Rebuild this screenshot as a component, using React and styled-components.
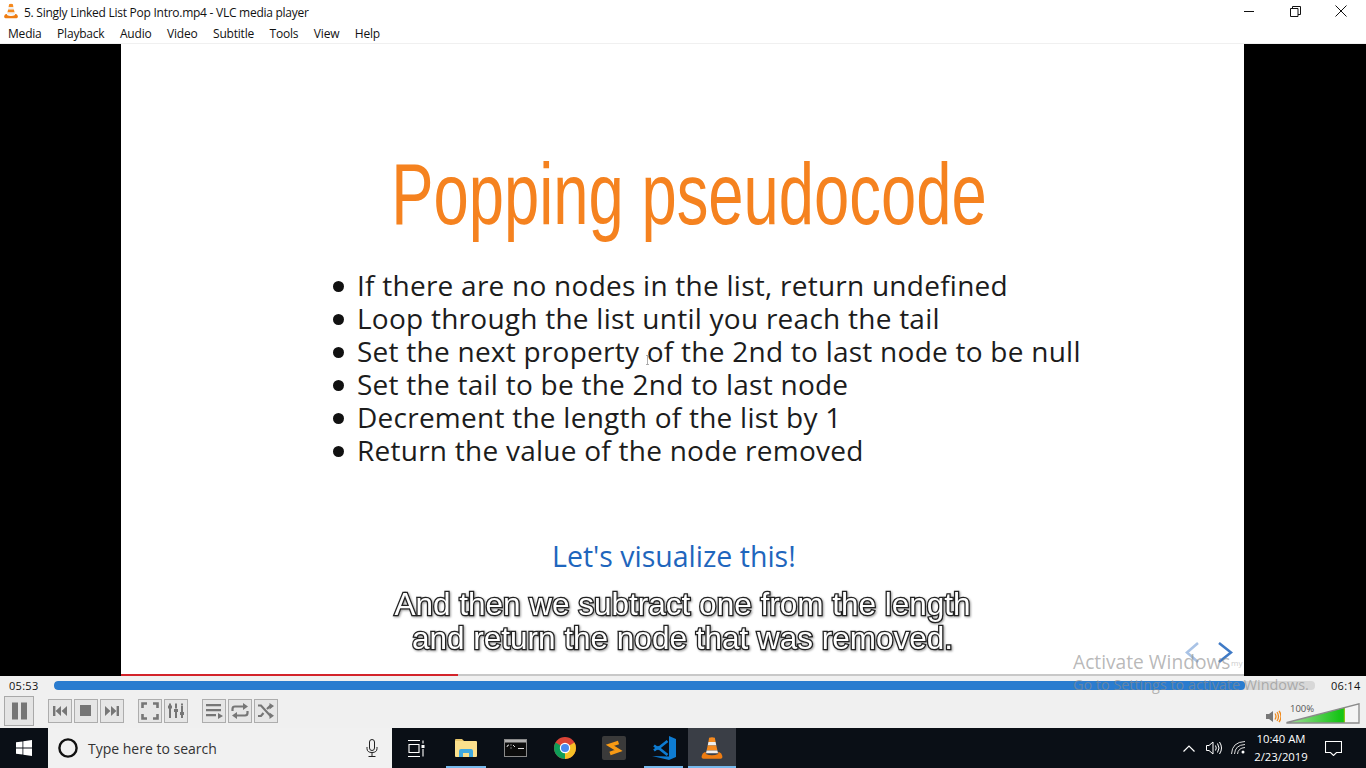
import React from "react";
import styled, { createGlobalStyle } from "styled-components";

const Global = createGlobalStyle`
  html, body { margin: 0; padding: 0; width: 1366px; height: 768px; overflow: hidden; background: #000; }
  * { box-sizing: border-box; }
`;
const UI = `"Open Sans", "Noto Sans", "Liberation Sans", sans-serif`;

const Page = styled.div`position: relative; width: 1366px; height: 768px; display: flex; flex-direction: column; font-family: ${UI}; overflow: hidden;`;
const TitleBar = styled.div`height: 22px; background: #fff; display: flex; align-items: center; padding: 0 2px 0 3px; gap: 5px; color: #111; font-size: 12px; letter-spacing: -0.26px;`;
const TitleText = styled.span`flex: 1; white-space: nowrap; padding-top: 2px;`;
const WinButtons = styled.div`display: flex; align-items: center; height: 22px;`;
const WinBtn = styled.div`width: 46px; height: 22px; display: flex; align-items: center; justify-content: center;`;
const MenuBar = styled.div`height: 22px; background: #fff; border-bottom: 1px solid #f0f0f0; display: flex; align-items: center; padding: 2px 0 0 8px; gap: 15.5px; font-size: 12px; color: #111; letter-spacing: -0.2px;`;
const Video = styled.div`position: relative; height: 632px; background: #000; display: flex; padding: 0 122px 0 121px;`;
const Slide = styled.div`position: relative; width: 1123px; overflow: hidden; background: #fff; display: flex; flex-direction: column; align-items: flex-start;`;
const Heading = styled.h1`margin: 95px 0 0 13px; width: 1110px; text-align: center; font: 400 88px/110px "Liberation Sans", sans-serif; color: #f5821f; transform: scaleX(.72); white-space: nowrap;`;
const Bullets = styled.ul`margin: 20px 0 0 0; padding: 0 0 0 236px; list-style: none; font: 400 28px/33px "Open Sans", sans-serif; color: #1c1c1c; letter-spacing: .25px;`;
const Bullet = styled.li`position: relative; white-space: nowrap; &::before { content: ""; position: absolute; left: -24px; top: 12px; width: 11px; height: 11px; border-radius: 50%; background: #111; }`;
const Visualize = styled.div`margin: 71px 0 0 431px; font: 400 28.5px/36px "Open Sans", sans-serif; color: #1f66bd;`;
const Subtitle = styled.div`position: absolute; left: 0; right: 0; top: 544px; text-align: center; font: 400 31.5px/33.5px "Liberation Sans", sans-serif; color: #fff; -webkit-text-stroke: 2.6px #222; paint-order: stroke fill; filter: drop-shadow(1px 1px 1px rgba(0,0,0,.4));`;
const SeekLine = styled.div`position: absolute; left: 0; right: 0; bottom: 0; height: 2px; background: #c8c8c8;`;
const SeekRed = styled.div`height: 2px; width: 337px; background: #d3232a;`;
const NavArrows = styled.svg`position: absolute; left: 1062px; top: 596px; width: 50px; height: 30px;`;
const Cursor = styled.svg`position: absolute; left: 524px; top: 311px; width: 5px; height: 10px;`;
const GhostLogo = styled.span`position: absolute; left: 1110px; top: 613px; font-size: 8px; color: #ccc;`;

const Controls = styled.div`height: 52px; background: #f0f0f0; display: flex; flex-direction: column;`;
const SeekRow = styled.div`height: 20px; display: flex; align-items: center; padding-bottom: 1px; font-size: 11px; color: #111; letter-spacing: .3px;`;
const Time = styled.span`width: ${p => p.$w}px; padding-left: ${p => p.$l}px; white-space: nowrap;`;
const Track = styled.div`width: 1261px; height: 9px; border-radius: 4px; background: #d8d8d8; overflow: hidden;`;
const Fill = styled.div`width: 1191px; height: 9px; background: #2a7ccf; border-radius: 4px;`;
const ButtonRow = styled.div`height: 32px; display: flex; align-items: flex-start; padding-left: 4px;`;
const BigBtn = styled.div`width: 30px; height: 30px; border: 1px solid #a9a9a9; background: #e4e4e4; display: flex; align-items: center; justify-content: center; margin-right: 14px;`;
const Group = styled.div`display: flex; gap: 2px; margin-top: 3px; margin-right: 14px;`;
const Btn = styled.div`width: 24px; height: 24px; border: 1px solid #adadad; background: #e6e6e6; display: flex; align-items: center; justify-content: center;`;
const Volume = styled.div`margin-left: auto; position: relative; display: flex; align-items: flex-end; width: 110px; height: 30px; padding: 0 6px 2px 6px;`;
const VolPct = styled.span`position: absolute; left: 34px; top: 6px; font-size: 9.5px; color: #555;`;

const Taskbar = styled.div`height: 40px; background: #0a0f16; display: flex; align-items: stretch;`;
const Start = styled.div`width: 48px; display: flex; align-items: center; justify-content: center;`;
const Search = styled.div`width: 344px; background: #f1f1f1; display: flex; align-items: center; padding: 0 14px 0 10px; gap: 10px; color: #333; font-size: 14px;`;
const SearchText = styled.span`flex: 1;`;
const Task = styled.div`position: relative; width: ${p => p.$active ? 48 : 49.4}px; display: flex; align-items: center; justify-content: center; background: ${p => p.$active ? "#3a3e46" : "transparent"}; &::after { content: ""; display: ${p => p.$open ? "block" : "none"}; position: absolute; bottom: 0; left: ${p => p.$active ? 0 : "5px"}; right: ${p => p.$active ? 0 : "5px"}; height: 2px; background: #76b9ed; }`;
const Tray = styled.div`margin-left: auto; display: flex; align-items: center; padding-right: 12px; color: #fff;`;
const TrayIcon = styled.div`width: ${p => p.$w}px; display: flex; align-items: center; justify-content: center;`;
const Clock = styled.div`width: 62px; text-align: center; font-size: 11.3px; line-height: 18px; color: #fff;`;
const Watermark = styled.div`position: absolute; left: 1073px; top: 649px; color: rgba(140,140,140,.62); pointer-events: none; white-space: nowrap;`;
const WmBig = styled.div`font-size: 19.2px; line-height: 25px;`;
const WmSmall = styled.div`font-size: 14.4px; line-height: 20px; margin-top: 1px;`;

const Cone = ({ s = 16 }) => (
  <svg width={s} height={s} viewBox="0 0 20 20">
    <path d="M7.6 1.5 Q10 .4 12.4 1.5 L13 5 H7Z" fill="#f58a1f" />
    <path d="M7 5 H13 L13.6 8 H6.4Z" fill="#eee" />
    <path d="M6.4 8 H13.6 L14.5 12 H5.5Z" fill="#f58a1f" />
    <path d="M5.5 12 H14.5 L15 14.4 H5Z" fill="#eee" />
    <path d="M3.8 13.6 H5 L4.8 15 Q10 17.2 15.2 15 L15 13.6 H16.2 Q18 14 18.6 16.6 Q19 18.8 17 19 H3 Q1 18.8 1.4 16.6 Q2 14 3.8 13.6Z" fill="#ef7d12" />
  </svg>
);
const Ic = styled.svg`display: block;`;
const G = "#767676";
const IcoPrev = () => <Ic width="16" height="16" viewBox="0 0 16 16" fill={G}><path d="M1 3h2.4v10H1zM9 3v10L3.6 8zM15 3v10L9.6 8z" /></Ic>;
const IcoStop = () => <Ic width="12" height="12" viewBox="0 0 12 12" fill={G}><rect width="11" height="11" /></Ic>;
const IcoNext = () => <Ic width="16" height="16" viewBox="0 0 16 16" fill={G}><path d="M1 3v10l5.4-5zM7 3v10l5.4-5zM12.6 3H15v10h-2.4z" /></Ic>;
const IcoFull = () => <Ic width="18" height="18" viewBox="0 0 18 18" fill="none" stroke={G} strokeWidth="2.6"><path d="M1.5 6V1.5H6M12 1.5h4.5V6M16.5 12v4.5H12M6 16.5H1.5V12" /></Ic>;
const IcoEq = () => <Ic width="18" height="18" viewBox="0 0 18 18" fill={G}><path d="M2 6h2v10H2zM8 9h2v7H8zM14 4h2v12h-2zM1 3.5h4v3H1zM7 7h4v3H7zM13 10h4v3h-4zM2 1.5h2v2H2zM8 1.5h2v5H8zM14 1.5h2v2h-2z" /></Ic>;
const IcoList = () => <Ic width="18" height="16" viewBox="0 0 18 16" fill={G}><path d="M1 1h15v2.2H1zM1 6h15v2.2H1zM1 11h10v2.2H1zM13 10l5 3-5 3z" /></Ic>;
const IcoLoop = () => <Ic width="18" height="18" viewBox="0 0 18 18" fill="none" stroke={G} strokeWidth="2.2"><path d="M1.5 9V7q0-2.5 2.5-2.5h9" /><path d="M16.5 9v2q0 2.5-2.5 2.5H5" /><path fill={G} stroke="none" d="M12 1l5 3.5L12 8zM6 10l-5 3.5L6 17z" /></Ic>;
const IcoShuffle = () => <Ic width="18" height="18" viewBox="0 0 18 18" fill="none" stroke={G} strokeWidth="2.2"><path d="M1 3.5h3l9 10h1M1 14h3l2.5-3M10 7l3-3h1" /><path fill={G} stroke="none" d="M12.5 1L17 4l-4.5 3.5zM12.5 10.5L17 13.7 12.5 17z" /></Ic>;

export default function App() {
  return (
    <Page>
      <Global />
      <TitleBar>
        <Cone s={16} />
        <TitleText>5. Singly Linked List Pop Intro.mp4 - VLC media player</TitleText>
        <WinButtons>
          <WinBtn><svg width="11" height="11" viewBox="0 0 11 11"><path d="M0 5.5h10" stroke="#111" /></svg></WinBtn>
          <WinBtn><svg width="11" height="11" viewBox="0 0 11 11" fill="none" stroke="#111"><path d="M.5 2.5h7.5v8H.5zM2.5 2.5v-2h8v8H8" /></svg></WinBtn>
          <WinBtn><svg width="12" height="12" viewBox="0 0 12 12" stroke="#111"><path d="M.5.5l11 11M11.500 .5l-11 11" /></svg></WinBtn>
        </WinButtons>
      </TitleBar>
      <MenuBar>
        {["Media", "Playback", "Audio", "Video", "Subtitle", "Tools", "View", "Help"].map(m => <span key={m}>{m}</span>)}
      </MenuBar>
      <Video>
        <Slide>
          <Heading>Popping pseudocode</Heading>
          <Bullets>
            <Bullet>If there are no nodes in the list, return undefined</Bullet>
            <Bullet>Loop through the list until you reach the tail</Bullet>
            <Bullet>Set the next property of the 2nd to last node to be null</Bullet>
            <Bullet>Set the tail to be the 2nd to last node</Bullet>
            <Bullet>Decrement the length of the list by 1</Bullet>
            <Bullet>Return the value of the node removed</Bullet>
          </Bullets>
          <Visualize>Let's visualize this!</Visualize>
          <Subtitle>And then we subtract one from the length<br />and return the node that was removed.</Subtitle>
          <NavArrows viewBox="0 0 50 30" fill="none" strokeWidth="2.6">
            <path d="M15 3L4 12.5 15 22" stroke="#a9c3e6" />
            <path d="M36 3l12 9.500L36 22" stroke="#3f7ac6" />
          </NavArrows>
          <GhostLogo>my</GhostLogo>
          <Cursor viewBox="0 0 5 10" fill="none" stroke="#999" strokeWidth=".8"><path d="M1 .5h3M2.500 .5v9M1 9.500h3" /></Cursor>
          <SeekLine><SeekRed /></SeekLine>
        </Slide>
      </Video>
      <Controls>
        <SeekRow>
          <Time $w={54} $l={9}>05:53</Time>
          <Track><Fill /></Track>
          <Time $w={51} $l={16}>06:14</Time>
        </SeekRow>
        <ButtonRow>
          <BigBtn><svg width="18" height="18" viewBox="0 0 18 18" fill={G}><path d="M2 .5h6v17H2zM11 .5h6v17h-6z" /></svg></BigBtn>
          <Group>
            <Btn><IcoPrev /></Btn><Btn><IcoStop /></Btn><Btn><IcoNext /></Btn>
          </Group>
          <Group>
            <Btn><IcoFull /></Btn><Btn><IcoEq /></Btn>
          </Group>
          <Group>
            <Btn><IcoList /></Btn><Btn><IcoLoop /></Btn><Btn><IcoShuffle /></Btn>
          </Group>
          <Volume>
            <svg width="15" height="13" viewBox="0 0 15 13" style={{ marginBottom: 1, marginLeft: 4, flexShrink: 0 }}>
              <path d="M0 4h3l4-3v11L3 9H0z" fill="#777" />
              <path d="M9 3.500q2 3 0 6M11 2q3 4.500 0 9M13 .8q4 5.700 0 11.400" fill="none" stroke="#f08a1d" strokeWidth="1.300" />
            </svg>
            <VolPct>100%</VolPct>
            <svg width="74" height="21" viewBox="0 0 74 21" style={{ marginLeft: 5, flexShrink: 0 }}>
              <defs>
                <linearGradient id="vg" x1="0" x2="1" y1="0" y2="0">
                  <stop offset="0" stopColor="#a5dd9b" />
                  <stop offset=".9" stopColor="#18c418" />
                  <stop offset=".97" stopColor="#16c516" />
                  <stop offset="1" stopColor="#b9c41a" />
                </linearGradient>
              </defs>
              <path d="M1 19.500L73 .8V20H1z" fill="#f4f4f4" />
              <path d="M1 19.500L59 4.500V20H1z" fill="url(#vg)" />
              <path d="M1 19.500L73 .8V20H1z" fill="none" stroke="#8a8a8a" strokeWidth="1.300" />
            </svg>
          </Volume>
        </ButtonRow>
      </Controls>
      <Taskbar>
        <Start>
          <svg width="16" height="16" viewBox="0 0 16 16" fill="#fff"><path d="M0 2.300l6.500-.9v6.200H0zM7.300 1.300L16 0v7.600H7.300zM0 8.400h6.500v6.200L0 13.700zM7.300 8.400H16V16l-8.700-1.300z" /></svg>
        </Start>
        <Search>
          <svg width="20" height="20" viewBox="0 0 20 20" fill="none" stroke="#111" strokeWidth="2.400"><circle cx="10" cy="10" r="8.600" /></svg>
          <SearchText>Type here to search</SearchText>
          <svg width="12" height="18" viewBox="0 0 12 18" fill="none" stroke="#222" strokeWidth="1"><rect x="3.500" y=".5" width="5" height="11" rx="2.500" /><path d="M1 8v1.500q0 4 5 4t5-4V8M6 13.500V17M2.500 17.500h7" /></svg>
        </Search>
        <Task>
          <svg width="17" height="17" viewBox="0 0 17 17" fill="none" stroke="#fff" strokeWidth="1.100"><path d="M0 .5h12M0 16.500h12M1 4.500h10v8H1zM15 .5v3M15 9v7.500" /><rect x="13.500" y="5" width="3" height="3" fill="#fff" stroke="none" /></svg>
        </Task>
        <Task $open>
          <svg width="22" height="20" viewBox="0 0 22 20"><path d="M0 2q0-1 1-1h6l2 2h-9z" fill="#e8c66a" /><path d="M0 3h21q1 0 1 1v14q0 1-1 1H1q-1 0-1-1z" fill="#fbe08c" /><path d="M4 19v-6q0-2 2-2h10q2 0 2 2v6h-4v-4H8v4z" fill="#3fa9e0" /></svg>
        </Task>
        <Task>
          <svg width="23" height="18" viewBox="0 0 23 18"><rect x=".5" y=".5" width="22" height="17" fill="#0c0c0c" stroke="#8a8a8a" /><rect x="1" y="1" width="21" height="2.500" fill="#b0b0b0" /><path d="M3 8q0-2 2-2M7 5.500v1M7 8.500v1M9 6l2 2M14 9.500h6" stroke="#ddd" fill="none" /></svg>
        </Task>
        <Task>
          <svg width="22" height="22" viewBox="0 0 22 22">
            <circle cx="11" cy="11" r="11" fill="#db4437" />
            <path d="M11 11L20.500 5.500A11 11 0 0 1 11 22z" fill="#f6c026" />
            <path d="M11 11L11 22A11 11 0 0 1 1.500 5.500z" fill="#0f9d58" />
            <circle cx="11" cy="11" r="5.200" fill="#fff" />
            <circle cx="11" cy="11" r="4" fill="#4a89f0" />
          </svg>
        </Task>
        <Task>
          <svg width="24" height="24" viewBox="0 0 24 24"><rect width="24" height="24" rx="2" fill="#3a3a3a" /><path d="M16.500 6.500L8 9.300l8.500 5.200L8 17.500" fill="none" stroke="#f89a14" strokeWidth="3.600" /></svg>
        </Task>
        <Task $open>
          <svg width="24" height="24" viewBox="0 0 24 24"><path d="M17 0L24 3V21L17 24L0 20L17 20.500V3.500Z" fill="#0e7cd2" /><path d="M15.500 5L6 12.500 2 9.500M15.500 19L6 11.500 2 14.500" fill="none" stroke="#0e7cd2" strokeWidth="2.600" /></svg>
        </Task>
        <Task $open $active>
          <Cone s={24} />
        </Task>
        <Tray>
          <TrayIcon $w={24}><svg width="12" height="7" viewBox="0 0 12 7" fill="none" stroke="#fff" strokeWidth="1.200"><path d="M.5 6.500L6 1l5.500 5.500" /></svg></TrayIcon>
          <TrayIcon $w={25}><svg width="16" height="14" viewBox="0 0 16 14" fill="none" stroke="#fff"><path d="M.5 4.500h2.500L7 1v12L3 9.500H.5zM9.500 4.500q1.500 2.500 0 5M11.500 2.500q3 4.500 0 9M13.500 1q4 6 0 12" /></svg></TrayIcon>
          <TrayIcon $w={24}><svg width="15" height="14" viewBox="0 0 15 14" fill="none" stroke="#ddd"><path d="M.5 13Q1 1 14 .5M3.500 13Q4 4 14 3.500M6.500 13Q7 7 14 6.500" /><circle cx="12" cy="11" r="1.500" fill="#fff" stroke="none" /></svg></TrayIcon>
          <Clock>10:40 AM<br />2/23/2019</Clock>
          <TrayIcon $w={42}><svg width="17" height="15" viewBox="0 0 17 15" fill="none" stroke="#fff" strokeWidth="1.100"><path d="M.5.500h16v11h-5l-3 3-3-3h-5z" /></svg></TrayIcon>
        </Tray>
      </Taskbar>
      <Watermark>
        <WmBig>Activate Windows</WmBig>
        <WmSmall>Go to Settings to activate Windows.</WmSmall>
      </Watermark>
    </Page>
  );
}
